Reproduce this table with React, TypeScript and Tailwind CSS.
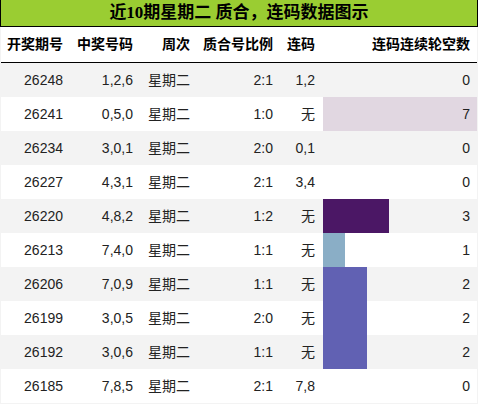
import React from "react";

const rows = [
  { id: "26248", nums: "1,2,6", ratio: "2:1", lian: "1,2", miss: 0 },
  { id: "26241", nums: "0,5,0", ratio: "1:0", lian: "无", miss: 7 },
  { id: "26234", nums: "3,0,1", ratio: "2:0", lian: "0,1", miss: 0 },
  { id: "26227", nums: "4,3,1", ratio: "2:1", lian: "3,4", miss: 0 },
  { id: "26220", nums: "4,8,2", ratio: "1:2", lian: "无", miss: 3 },
  { id: "26213", nums: "7,4,0", ratio: "1:1", lian: "无", miss: 1 },
  { id: "26206", nums: "7,0,9", ratio: "1:1", lian: "无", miss: 2 },
  { id: "26199", nums: "3,0,5", ratio: "2:0", lian: "无", miss: 2 },
  { id: "26192", nums: "3,0,6", ratio: "1:1", lian: "无", miss: 2 },
  { id: "26185", nums: "7,8,5", ratio: "2:1", lian: "7,8", miss: 0 },
];

const barColor: Record<number, string> = {
  7: "#e1d7e1",
  3: "#4b1765",
  1: "#8aaec6",
  2: "#6161b3",
};

const cols = "grid grid-cols-[70px_70px_57px_83px_42px_154px]";
const font = { fontFamily: '"Liberation Sans", "Noto Sans CJK SC", sans-serif' };

export default function App() {
  return (
    <div className="w-[478px] h-[404px] bg-[#f3f3f3] overflow-hidden text-[14px] text-[#222]" style={font}>
      <div
        className="h-[27px] bg-[#9acd32] border-x border-b border-black flex items-center justify-center text-[17px] font-bold text-black"
        style={{ fontFamily: '"Liberation Serif", "Noto Sans CJK SC", serif' }}
      >
        近10期星期二 质合，连码数据图示
      </div>
      <div className="px-px">
        <div className={`${cols} h-[36px] bg-white border-b border-black font-bold text-black`}>
          <div className="flex items-center justify-end pr-2">开奖期号</div>
          <div className="flex items-center justify-end pr-2">中奖号码</div>
          <div className="flex items-center justify-end pr-2">周次</div>
          <div className="flex items-center justify-end pr-2">质合号比例</div>
          <div className="flex items-center justify-end pr-2">连码</div>
          <div className="flex items-center justify-end pr-[7px]">连码连续轮空数</div>
        </div>
        {rows.map((r, i) => (
          <div key={r.id} className={`${cols} h-[34px] ${i % 2 === 0 ? "bg-[#f3f3f3]" : "bg-white"}`}>
            <div className="flex items-center justify-end pr-2">{r.id}</div>
            <div className="flex items-center justify-end pr-2">{r.nums}</div>
            <div className="flex items-center justify-end pr-2">星期二</div>
            <div className="flex items-center justify-end pr-2">{r.ratio}</div>
            <div className="flex items-center justify-end pr-2">{r.lian}</div>
            <div className="relative flex items-center justify-end pr-[7px]">
              {r.miss > 0 && (
                <div
                  className="absolute left-0 top-0 bottom-0"
                  style={{ width: r.miss * 22, background: barColor[r.miss] }}
                />
              )}
              <span className="relative">{r.miss}</span>
            </div>
          </div>
        ))}
      </div>
    </div>
  );
}
